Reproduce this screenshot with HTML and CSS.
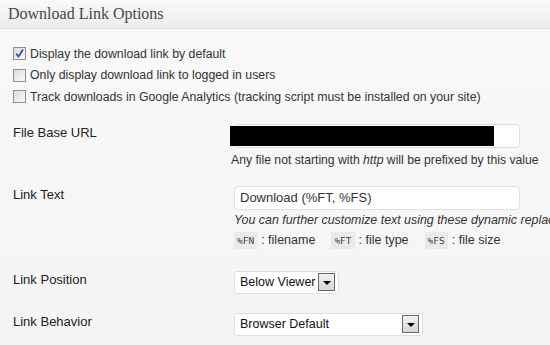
FILE: index.html
```html
<!DOCTYPE html>
<html lang="en">
<head>
    <meta charset="UTF-8">
    <title>Download Link Options</title>
    <link rel="stylesheet" href="styles.css">
</head>
<body>
    <div class="postbox">
        <h3 class="hndle">Download Link Options</h3>

        <div class="inside">
            <div class="checks">
                <label class="check"><span class="box checked"><svg width="11" height="11" viewBox="0 0 11 11"><path d="M2 5.5 L4.5 8.5 L9 1.5" fill="none" stroke="#2a4fb0" stroke-width="1.8"/></svg></span>Display the download link by default</label>
                <label class="check"><span class="box"></span>Only display download link to logged in users</label>
                <label class="check"><span class="box"></span>Track downloads in Google Analytics (tracking script must be installed on your site)</label>
            </div>

            <div class="row row-url">
                <div class="label">File Base URL</div>
                <div class="field">
                    <div class="text-input"><span class="redacted"></span></div>
                    <p class="hint">Any file not starting with <em>http</em> will be prefixed by this value</p>
                </div>
            </div>

            <div class="row row-text">
                <div class="label">Link Text</div>
                <div class="field">
                    <div class="text-input">Download (%FT, %FS)</div>
                    <p class="note">You can further customize text using these dynamic replacements:</p>
                    <p class="codes">
                        <code>%FN</code><span class="desc">: filename</span>
                        <code>%FT</code><span class="desc">: file type</span>
                        <code>%FS</code><span class="desc">: file size</span>
                    </p>
                </div>
            </div>

            <div class="row row-pos">
                <div class="label">Link Position</div>
                <div class="field">
                    <div class="select select-short"><span>Below Viewer</span><span class="arrow"></span></div>
                </div>
            </div>

            <div class="row row-behavior">
                <div class="label">Link Behavior</div>
                <div class="field">
                    <div class="select select-wide"><span>Browser Default</span><span class="arrow"></span></div>
                </div>
            </div>
        </div>
    </div>
</body>
</html>
```

FILE: styles.css
```css
body {
    margin: 0;
    font-family: "Liberation Sans", Arial, sans-serif;
    font-size: 12.3px;
    color: #333;
    background: #f5f5f5;
}
.postbox {
    width: 550px;
    height: 345px;
    overflow: hidden;
    background: linear-gradient(#f9f9f9, #f4f4f4);
}
.hndle {
    margin: 0;
    height: 29px;
    padding: 0 8px;
    line-height: 28px;
    font-family: "Liberation Serif", Georgia, serif;
    font-size: 16px;
    font-weight: normal;
    color: #464646;
    background: linear-gradient(#f9f9f9, #ececec);
    border-bottom: 1px solid #dfdfdf;
    box-sizing: border-box;
}
.inside {
    padding: 14px 0 0 13px;
}
.checks {
    margin-bottom: 16px;
}
.check {
    display: flex;
    align-items: center;
    height: 21.5px;
    white-space: nowrap;
}
.box {
    width: 11px;
    height: 11px;
    margin-right: 4px;
    border: 1px solid #8f8f8f;
    background: linear-gradient(135deg, #dcdcdc, #fafafa);
    display: flex;
    align-items: center;
    justify-content: center;
}
.row {
    display: grid;
    grid-template-columns: 221px 1fr;
}
.label {
    padding-top: 1px;
    font-size: 13px;
    color: #222;
}
.field p {
    margin: 0;
    white-space: nowrap;
}
.text-input {
    width: 274px;
    height: 22px;
    border: 1px solid #dfdfdf;
    border-radius: 4px;
    background: #fff;
    padding: 0 5px;
    line-height: 22px;
    font-size: 13px;
    color: #333;
    position: relative;
}
.redacted {
    position: absolute;
    left: -5px;
    top: 1px;
    width: 264px;
    height: 20px;
    background: #000;
}
.hint {
    font-size: 12.2px;
    padding-top: 5px;
    margin-left: -3px !important;
    color: #333;
}
.row-text {
    margin-top: 19px;
}
.note {
    font-style: italic;
    font-size: 12.4px;
    padding-top: 3px;
}
.codes {
    padding-top: 5px;
    font-size: 12.5px;
    display: flex;
    align-items: center;
}
.codes code {
    font-family: "DejaVu Sans Mono", "Liberation Mono", monospace;
    font-size: 9.5px;
    background: #eaeaea;
    color: #444;
    padding: 3px 3px;
    margin-right: 4px;
}
.codes .desc {
    margin-right: 16px;
}
.row-pos {
    margin-top: 22px;
}
.row-behavior {
    margin-top: 19px;
}
.select {
    height: 23px;
    border: 1px solid #dfdfdf;
    border-radius: 3px;
    background: #fff;
    display: flex;
    align-items: center;
    justify-content: space-between;
    padding: 0 3px 0 5px;
    font-size: 12.5px;
    color: #111;
    white-space: nowrap;
    box-sizing: border-box;
}
.select-short {
    width: 105px;
}
.select-wide {
    width: 189px;
}
.arrow {
    width: 15px;
    height: 16px;
    border: 1px solid #666;
    background: linear-gradient(#f2f2f2, #d6d6d6);
    position: relative;
    flex: none;
}
.arrow::after {
    content: "";
    position: absolute;
    left: 4px;
    top: 7px;
    border-left: 4px solid transparent;
    border-right: 4px solid transparent;
    border-top: 4px solid #000;
}
```
